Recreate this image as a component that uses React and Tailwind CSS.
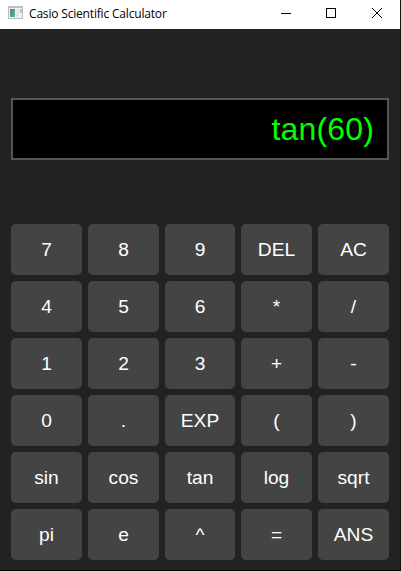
const keys = [
  "7", "8", "9", "DEL", "AC",
  "4", "5", "6", "*", "/",
  "1", "2", "3", "+", "-",
  "0", ".", "EXP", "(", ")",
  "sin", "cos", "tan", "log", "sqrt",
  "pi", "e", "^", "=", "ANS",
];

function AppIcon() {
  return (
    <svg width="15" height="13" viewBox="0 0 15 13" className="mr-px" shapeRendering="crispEdges">
      <defs>
        <linearGradient id="pane" x1="0" y1="0" x2="1" y2="1">
          <stop offset="0" stopColor="#4f7fa6" />
          <stop offset="1" stopColor="#63b87c" />
        </linearGradient>
      </defs>
      <rect width="15" height="13" fill="#bcc0c2" />
      <rect x="1" y="2" width="13" height="10" fill="#f1f2f3" />
      <rect x="2" y="3" width="5" height="8" fill="url(#pane)" />
      <rect x="8" y="3" width="3" height="8" fill="#e4e6e8" />
      <rect x="12" y="3" width="2" height="4" fill="#a9c9d6" />
    </svg>
  );
}

function TitleBar() {
  return (
    <header className="flex h-[29px] items-start bg-white pl-2 text-black">
      <div className="pt-1.5">
        <AppIcon />
      </div>
      <h1 className="ml-[5px] flex-1 whitespace-nowrap font-['Open_Sans','Noto_Sans',sans-serif] text-[12px] leading-[28px] tracking-[-0.18px]">
        Casio Scientific Calculator
      </h1>
      <div className="flex h-full items-start pt-2 pr-[18px]">
        <svg width="10" height="10" className="mr-[35px]" shapeRendering="crispEdges">
          <rect y="5" width="10" height="1" />
        </svg>
        <svg width="10" height="10" className="mr-9" fill="none" stroke="#000" shapeRendering="crispEdges">
          <rect x="0.5" y="0.5" width="9" height="9" />
        </svg>
        <svg width="10" height="10" fill="none" stroke="#000">
          <path d="M0 0L10 10M10 0L0 10" />
        </svg>
      </div>
    </header>
  );
}

export default function App() {
  return (
    <div className="h-[571px] w-[401px] border-r border-b border-r-[#141414] border-b-black bg-[#222222] font-['Liberation_Sans',Arial,sans-serif]">
      <TitleBar />
      <main className="flex flex-col px-[11px] pt-[69px]">
        <div className="flex h-[62px] items-center justify-end border-2 border-[#555555] bg-black pr-[13px] text-[32px] tracking-[0.15px] text-[#00ff00]">
          tan(60)
        </div>
        <div className="mt-16 grid grid-cols-[71px_71px_70px_71px_71px] gap-1.5">
          {keys.map((key) => (
            <button key={key} className="flex h-[51px] items-center justify-center rounded-[5px] bg-[#444444] text-[19.2px] leading-[21px] text-white">
              {key}
            </button>
          ))}
        </div>
      </main>
    </div>
  );
}
